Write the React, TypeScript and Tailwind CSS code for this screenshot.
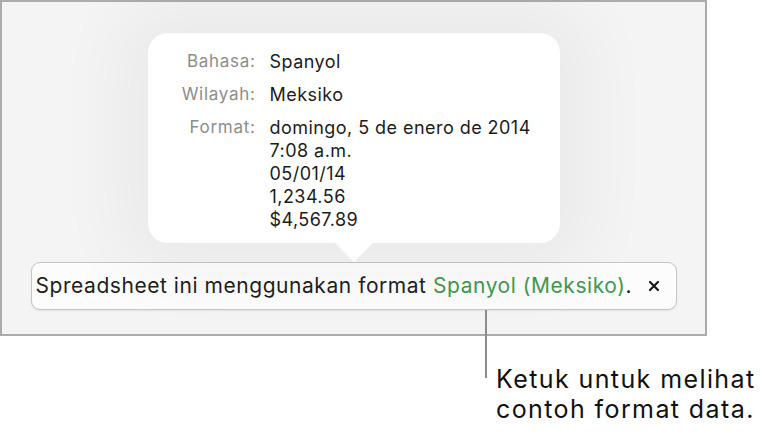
export default function App() {
  return (
    <div
      className="relative w-[769px] h-[439px] bg-white overflow-hidden"
      style={{ fontFamily: "Inter, 'Liberation Sans', sans-serif" }}
    >
      {/* framed screen */}
      <div className="w-[707px] h-[336px] border-2 border-[#ababab] bg-[#f4f4f4] flex flex-col items-center">
        <div className="relative mt-[31px] w-[412px] h-[210px] bg-white rounded-[20px] shadow-[0_0_70px_30px_rgba(0,0,0,0.045)] flex pl-[36px] pt-[17px] leading-[23px]">
          <div className="flex flex-col items-end text-[#8c8c8c] w-[72px] text-[17px] tracking-[0.7px]">
            <div className="h-[33px]">Bahasa:</div>
            <div className="h-[33px]">Wilayah:</div>
            <div>Format:</div>
          </div>
          <div className="flex flex-col ml-[14px] text-[#1c1c1c] text-[18px] tracking-[0.45px]">
            <div className="h-[33px]">Spanyol</div>
            <div className="h-[33px]">Meksiko</div>
            <div>domingo, 5 de enero de 2014</div>
            <div>7:08 a.m.</div>
            <div>05/01/14</div>
            <div>1,234.56</div>
            <div>$4,567.89</div>
          </div>
          <div className="absolute left-1/2 -translate-x-1/2 -bottom-[19px] w-0 h-0 border-l-[20px] border-r-[20px] border-t-[20px] border-l-transparent border-r-transparent border-t-white" />
        </div>

        <div className="mt-[19px] w-[646px] h-[48px] rounded-[9px] border border-[#c6c6c6] bg-[#fcfcfc] shadow-[0_1px_2px_rgba(0,0,0,0.08)] flex items-center pl-[4px] pr-[16px] text-[21px] tracking-[0.55px] text-[#1f1f1f]">
          <span>
            Spreadsheet ini menggunakan format{" "}
            <span className="text-[#3f9a4f]">Spanyol (Meksiko)</span>.
          </span>
          <svg className="ml-auto" width="12" height="12" viewBox="0 0 12 12">
            <path d="M2 2 L10 10 M10 2 L2 10" stroke="#1a1a1a" strokeWidth="2.2" strokeLinecap="round" />
          </svg>
        </div>
      </div>

      {/* callout */}
      <div className="absolute left-[485px] top-[310px] w-[2px] h-[68px] bg-[#8c8c8c]" />
      <div className="absolute left-[496px] top-[364px] text-[25px] leading-[30px] tracking-[1.4px] text-[#111]">
        Ketuk untuk melihat
        <br />
        contoh format data.
      </div>
    </div>
  );
}
